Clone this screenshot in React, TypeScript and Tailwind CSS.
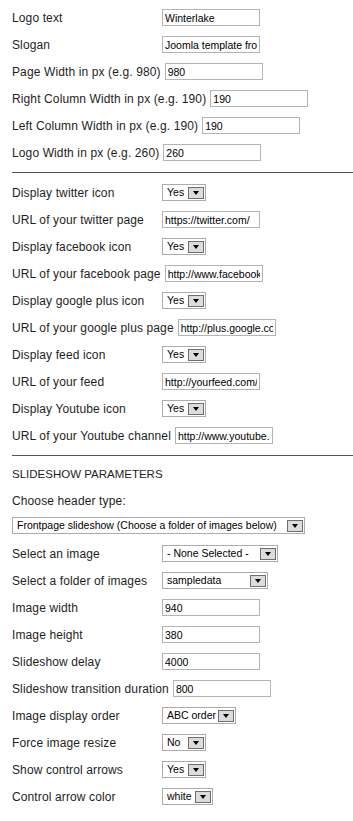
import React from "react";

type FieldProps = { label: string; children: React.ReactNode };

const Field = ({ label, children }: FieldProps) => (
  <div className="flex h-[27px] items-center">
    <span className="mr-[4px] min-w-[146px] whitespace-nowrap tracking-[0.12px]">{label}</span>
    {children}
  </div>
);

const TextInput = ({ value }: { value: string }) => (
  <input
    readOnly
    defaultValue={value}
    className="box-border h-[17px] w-[98px] border border-[#b4b4b4] bg-white px-[2px] text-[10.5px] text-black outline-none"
  />
);

const Select = ({ value, width }: { value: string; width: string }) => (
  <div className={`box-border flex h-[17px] items-end border border-[#acacac] bg-white ${width}`}>
    <span className="flex-1 self-center whitespace-nowrap pl-[4px] text-[10.5px] leading-[13px] text-black">
      {value}
    </span>
    <span className="mb-[1px] mr-[1px] flex h-[12px] w-[16px] shrink-0 items-center justify-center border border-[#6e6e6e] bg-[#dcdcdc]">
      <span className="h-0 w-0 border-l-[3px] border-r-[3px] border-t-[4px] border-l-transparent border-r-transparent border-t-black" />
    </span>
  </div>
);

const Line = () => <div className="my-[6px] h-px bg-[#555]" />;

export default function App() {
  return (
    <div className="min-h-[821px] bg-white pl-[12px] pt-[4px] font-['Liberation_Sans',Arial,sans-serif] text-[12px] text-[#1e1e1e]">
      {/* template basics */}
      <Field label="Logo text"><TextInput value="Winterlake" /></Field>
      <Field label="Slogan"><TextInput value="Joomla template from Shape5" /></Field>
      <Field label="Page Width in px (e.g. 980)"><TextInput value="980" /></Field>
      <Field label="Right Column Width in px (e.g. 190)"><TextInput value="190" /></Field>
      <Field label="Left Column Width in px (e.g. 190)"><TextInput value="190" /></Field>
      <Field label="Logo Width in px (e.g. 260)"><TextInput value="260" /></Field>

      <Line />

      {/* social icons */}
      <Field label="Display twitter icon"><Select value="Yes" width="w-[44px]" /></Field>
      <Field label="URL of your twitter page"><TextInput value="https://twitter.com/" /></Field>
      <Field label="Display facebook icon"><Select value="Yes" width="w-[44px]" /></Field>
      <Field label="URL of your facebook page"><TextInput value="http://www.facebook.com/" /></Field>
      <Field label="Display google plus icon"><Select value="Yes" width="w-[44px]" /></Field>
      <Field label="URL of your google plus page"><TextInput value="http://plus.google.com/" /></Field>
      <Field label="Display feed icon"><Select value="Yes" width="w-[44px]" /></Field>
      <Field label="URL of your feed"><TextInput value="http://yourfeed.com/" /></Field>
      <Field label="Display Youtube icon"><Select value="Yes" width="w-[44px]" /></Field>
      <Field label="URL of your Youtube channel"><TextInput value="http://www.youtube.com/" /></Field>

      <Line />

      {/* slideshow */}
      <div className="flex h-[26px] items-center text-[11.5px]">SLIDESHOW PARAMETERS</div>
      <div className="flex h-[26px] items-center tracking-[0.12px]">Choose header type:</div>
      <div className="pb-[6px] pt-[3px]">
        <Select value="Frontpage slideshow (Choose a folder of images below)" width="w-[293px]" />
      </div>
      <Field label="Select an image"><Select value="- None Selected -" width="w-[116px]" /></Field>
      <Field label="Select a folder of images"><Select value="sampledata" width="w-[106px]" /></Field>
      <Field label="Image width"><TextInput value="940" /></Field>
      <Field label="Image height"><TextInput value="380" /></Field>
      <Field label="Slideshow delay"><TextInput value="4000" /></Field>
      <Field label="Slideshow transition duration"><TextInput value="800" /></Field>
      <Field label="Image display order"><Select value="ABC order" width="w-[74px]" /></Field>
      <Field label="Force image resize"><Select value="No" width="w-[44px]" /></Field>
      <Field label="Show control arrows"><Select value="Yes" width="w-[44px]" /></Field>
      <Field label="Control arrow color"><Select value="white" width="w-[51px]" /></Field>
    </div>
  );
}
